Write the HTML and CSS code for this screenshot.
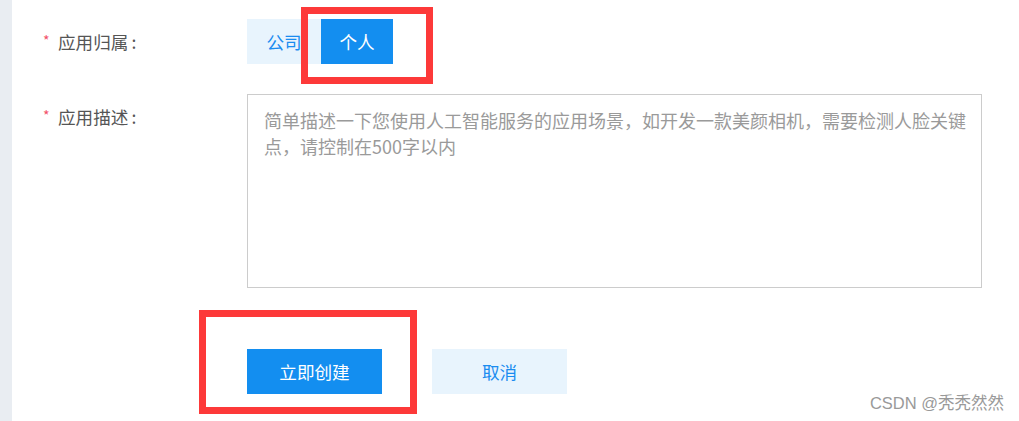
FILE: index.html
```html
<!DOCTYPE html>
<html lang="zh-CN">
<head>
<meta charset="utf-8">
<title>创建应用</title>
<link rel="stylesheet" href="styles.css">
</head>
<body>
<div class="page">
  <div class="strip"></div>
  <main class="main">
    <form class="form">
      <div class="row">
        <label class="label"><span class="req">*</span>应用归属<span class="colon">:</span></label>
        <div class="control toggle">
          <button type="button" class="tbtn">公司</button>
          <button type="button" class="tbtn active">个人</button>
        </div>
      </div>
      <div class="row row-desc">
        <label class="label"><span class="req">*</span>应用描述<span class="colon">:</span></label>
        <div class="control">
          <textarea class="desc" placeholder="简单描述一下您使用人工智能服务的应用场景，如开发一款美颜相机，需要检测人脸关键点，请控制在500字以内"></textarea>
        </div>
      </div>
      <div class="row row-actions">
        <div class="label"></div>
        <div class="control actions">
          <button type="button" class="btn primary">立即创建</button>
          <button type="button" class="btn ghost">取消</button>
        </div>
      </div>
    </form>
    <div class="mark mark-toggle"></div>
    <div class="mark mark-create"></div>
    <div class="watermark">CSDN @秃秃然然</div>
  </main>
</div>
</body>
</html>
```

FILE: styles.css
```css
html, body {
  margin: 0;
  padding: 0;
  background: #ffffff;
}
body {
  font-family: "Noto Sans CJK SC", "Noto Sans", "Liberation Sans", sans-serif;
  width: 1019px;
  height: 421px;
  overflow: hidden;
}
.page {
  display: flex;
  height: 421px;
}
.strip {
  width: 12px;
  flex: none;
  background: #e9edf2;
}
.main {
  position: relative;
  flex: 1;
}
.form {
  display: flex;
  flex-direction: column;
  padding: 19px 0 0 31px;
}
.row {
  display: flex;
  align-items: flex-start;
}
.row-desc {
  margin-top: 30px;
}
.row-actions {
  margin-top: 61px;
}
.label {
  width: 204px;
  flex: none;
  font-size: 17.6px;
  line-height: 45px;
  color: #555555;
  white-space: nowrap;
}
.colon {
  margin-left: 3px;
}
.req {
  display: inline-block;
  width: 15px;
  color: #f2506a;
  font-size: 14px;
  vertical-align: 3px;
  line-height: 1;
}
.control {
  display: flex;
}
.tbtn {
  height: 45px;
  border: 0;
  margin: 0;
  padding: 0;
  font-family: inherit;
  font-size: 17.6px;
  cursor: pointer;
}
.tbtn:first-child {
  width: 74px;
  background: #e8f4fd;
  color: #1a8cf0;
}
.tbtn.active {
  width: 72px;
  background: #138ef0;
  color: #ffffff;
}
.desc {
  box-sizing: border-box;
  width: 735px;
  height: 194px;
  margin: 0;
  border: 1px solid #cccccc;
  padding: 12px 8px 12px 16px;
  font-family: inherit;
  font-size: 18px;
  line-height: 26px;
  color: #333;
  resize: none;
  outline: none;
  background: #fff;
}
.desc::placeholder {
  color: #9a9a9a;
  opacity: 1;
}
.actions {
  gap: 50px;
}
.btn {
  width: 135px;
  height: 45px;
  border: 0;
  margin: 0;
  padding: 0;
  font-family: inherit;
  font-size: 17.6px;
  cursor: pointer;
}
.btn.primary {
  background: #138ef0;
  color: #ffffff;
}
.btn.ghost {
  background: #e8f4fd;
  color: #1a8cf0;
}
.mark {
  position: absolute;
  box-sizing: border-box;
  border: 7px solid #fd3939;
  pointer-events: none;
}
.mark-toggle {
  left: 289px;
  top: 7px;
  width: 132px;
  height: 77px;
}
.mark-create {
  left: 187px;
  top: 310px;
  width: 218px;
  height: 104px;
}
.watermark {
  position: absolute;
  right: 15px;
  bottom: 8px;
  font-family: "Liberation Sans", "Noto Sans CJK SC", sans-serif;
  font-size: 16.5px;
  line-height: 20px;
  color: #999999;
  text-shadow: 0 0 2px #ffffff;
  white-space: nowrap;
}
```
